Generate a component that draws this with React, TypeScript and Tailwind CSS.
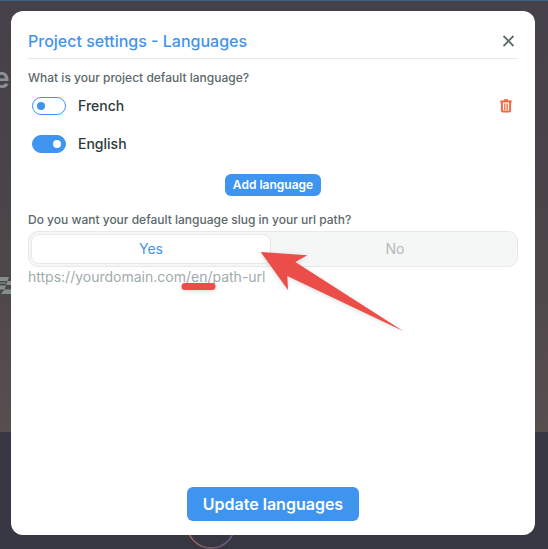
import { useState } from "react";

function Backdrop() {
  return (
    <div aria-hidden="true" className="absolute inset-0 overflow-hidden bg-[#373743]">
      <div className="h-[432px] border-t border-[#3e6285] bg-linear-to-b from-[#45414a] via-[#4b4549] to-[#574e4e]" />
      <span className="absolute top-[60px] -left-[7px] text-[28px] leading-9 font-semibold text-[#8a9093]">e</span>
      <svg className="absolute top-[277px] left-0" width="12" height="18" viewBox="0 0 12 18" fill="#84908f">
        <path d="M0 0H9L7.5 4H0ZM7.5 4H12V8H6ZM0 8.5H6L4.5 12.5H0ZM4.5 12.5H12V17H1Z" />
        <path d="M0 5H6V7H0Z" fill="#6d7373" />
      </svg>
      <svg className="absolute top-[500px] left-[186px]" width="50" height="50" viewBox="0 0 50 50" fill="none">
        <defs>
          <linearGradient id="ring" x1="0" x2="1">
            <stop stopColor="#966954" />
            <stop offset="1" stopColor="#66588a" />
          </linearGradient>
        </defs>
        <circle cx="25" cy="24" r="24" stroke="url(#ring)" strokeWidth="1.5" />
      </svg>
    </div>
  );
}

function TrashIcon() {
  return (
    <svg width="12" height="14" viewBox="0 0 12 14" fill="none" stroke="#f4683c">
      <path d="M0.3 2.4H11.7" strokeWidth="2" />
      <path d="M4 1.2H8" strokeWidth="2" />
      <path d="M1.9 3V11.6Q1.9 12.6 2.9 12.6H9.1Q10.1 12.6 10.1 11.6V3" strokeWidth="2" />
      <path d="M4.8 4.5V11M7.2 4.5V11" strokeWidth="1.3" />
    </svg>
  );
}

const languages = ["French", "English"];

export default function App() {
  const [defaultLanguage, setDefaultLanguage] = useState("English");
  const [slug, setSlug] = useState(true);
  const option = "flex-1 rounded-lg border text-sm ";
  const active = "border-[#e6e9e9] bg-white text-[#3f94f0]";
  const inactive = "border-transparent text-[#b1baba]";

  return (
    <div className="relative flex min-h-screen pt-[11px] pr-[13px] pb-[14px] pl-[11px] font-['Inter',sans-serif]">
      <Backdrop />
      <main role="dialog" aria-labelledby="title" className="relative flex flex-1 flex-col rounded-xl bg-white px-[17px] pt-4 pb-[14px]">
        <header className="flex h-8 items-center justify-between border-b border-[#e7e8e9] pb-1">
          <h1 id="title" className="text-base leading-6 font-medium text-[#3f94f0]">Project settings - Languages</h1>
          <button type="button" aria-label="Close" className="p-1 text-[#5c686b]">
            <svg width="11" height="12" viewBox="0 0 11 12" fill="none" stroke="currentColor" strokeWidth="1.8">
              <path d="M0.5 1L10.5 11M10.5 1L0.5 11" />
            </svg>
          </button>
        </header>

        <h2 className="mt-[11px] text-xs leading-4 font-medium text-[#5c686b]">What is your project default language?</h2>
        <ul className="mt-px px-1">
          {languages.map((name) => (
            <li key={name} className="flex h-[38px] items-center justify-between">
              <label className="flex items-center gap-3 text-sm font-medium text-[#2f393a]">
                <input
                  type="checkbox"
                  role="switch"
                  checked={defaultLanguage === name}
                  onChange={() => setDefaultLanguage(name)}
                  className="flex h-[18px] w-[34px] appearance-none items-center rounded-full border border-[#3f94f0] bg-white px-1 before:size-2 before:rounded-full before:bg-[#3f94f0] checked:justify-end checked:bg-[#3f94f0] checked:before:bg-white"
                />
                {name}
              </label>
              {defaultLanguage !== name && (
                <button type="button" aria-label={`Remove ${name}`} className="px-0.5">
                  <TrashIcon />
                </button>
              )}
            </li>
          ))}
        </ul>
        <button type="button" className="mt-[11px] h-[22px] self-center rounded-md bg-[#3f94f0] px-2 text-xs font-semibold text-white">
          Add language
        </button>

        <h2 className="mt-4 text-xs leading-4 font-medium text-[#5c686b]">Do you want your default language slug in your url path?</h2>
        <div className="relative mt-[3px]">
          <div role="group" aria-label="Default language slug" className="flex h-9 gap-1 rounded-[10px] border border-[#e6e9e9] bg-[#f5f7f7] p-0.5">
            <button type="button" aria-pressed={slug} onClick={() => setSlug(true)} className={option + (slug ? active : inactive)}>Yes</button>
            <button type="button" aria-pressed={!slug} onClick={() => setSlug(false)} className={option + (slug ? inactive : active)}>No</button>
          </div>
          <p className="text-sm leading-5 text-[#a0acac]">https://yourdomain.com{slug && "/en"}/path-url</p>
          <svg aria-hidden="true" className="pointer-events-none absolute top-0 left-[150px] drop-shadow-sm" width="240" height="110" viewBox="178 231 240 110" fill="#eb4d48">
            <path d="M260.7 252L307.3 255.3L295.3 262L403.5 331.3L287.3 276L288 290Z" />
            <path d="M185 286.5H212" stroke="#eb4d48" strokeWidth="7" strokeLinecap="round" />
          </svg>
        </div>

        <button type="button" className="mt-auto h-[34px] self-center rounded-md bg-[#3f94f0] px-4 text-base font-semibold text-white">
          Update languages
        </button>
      </main>
    </div>
  );
}
